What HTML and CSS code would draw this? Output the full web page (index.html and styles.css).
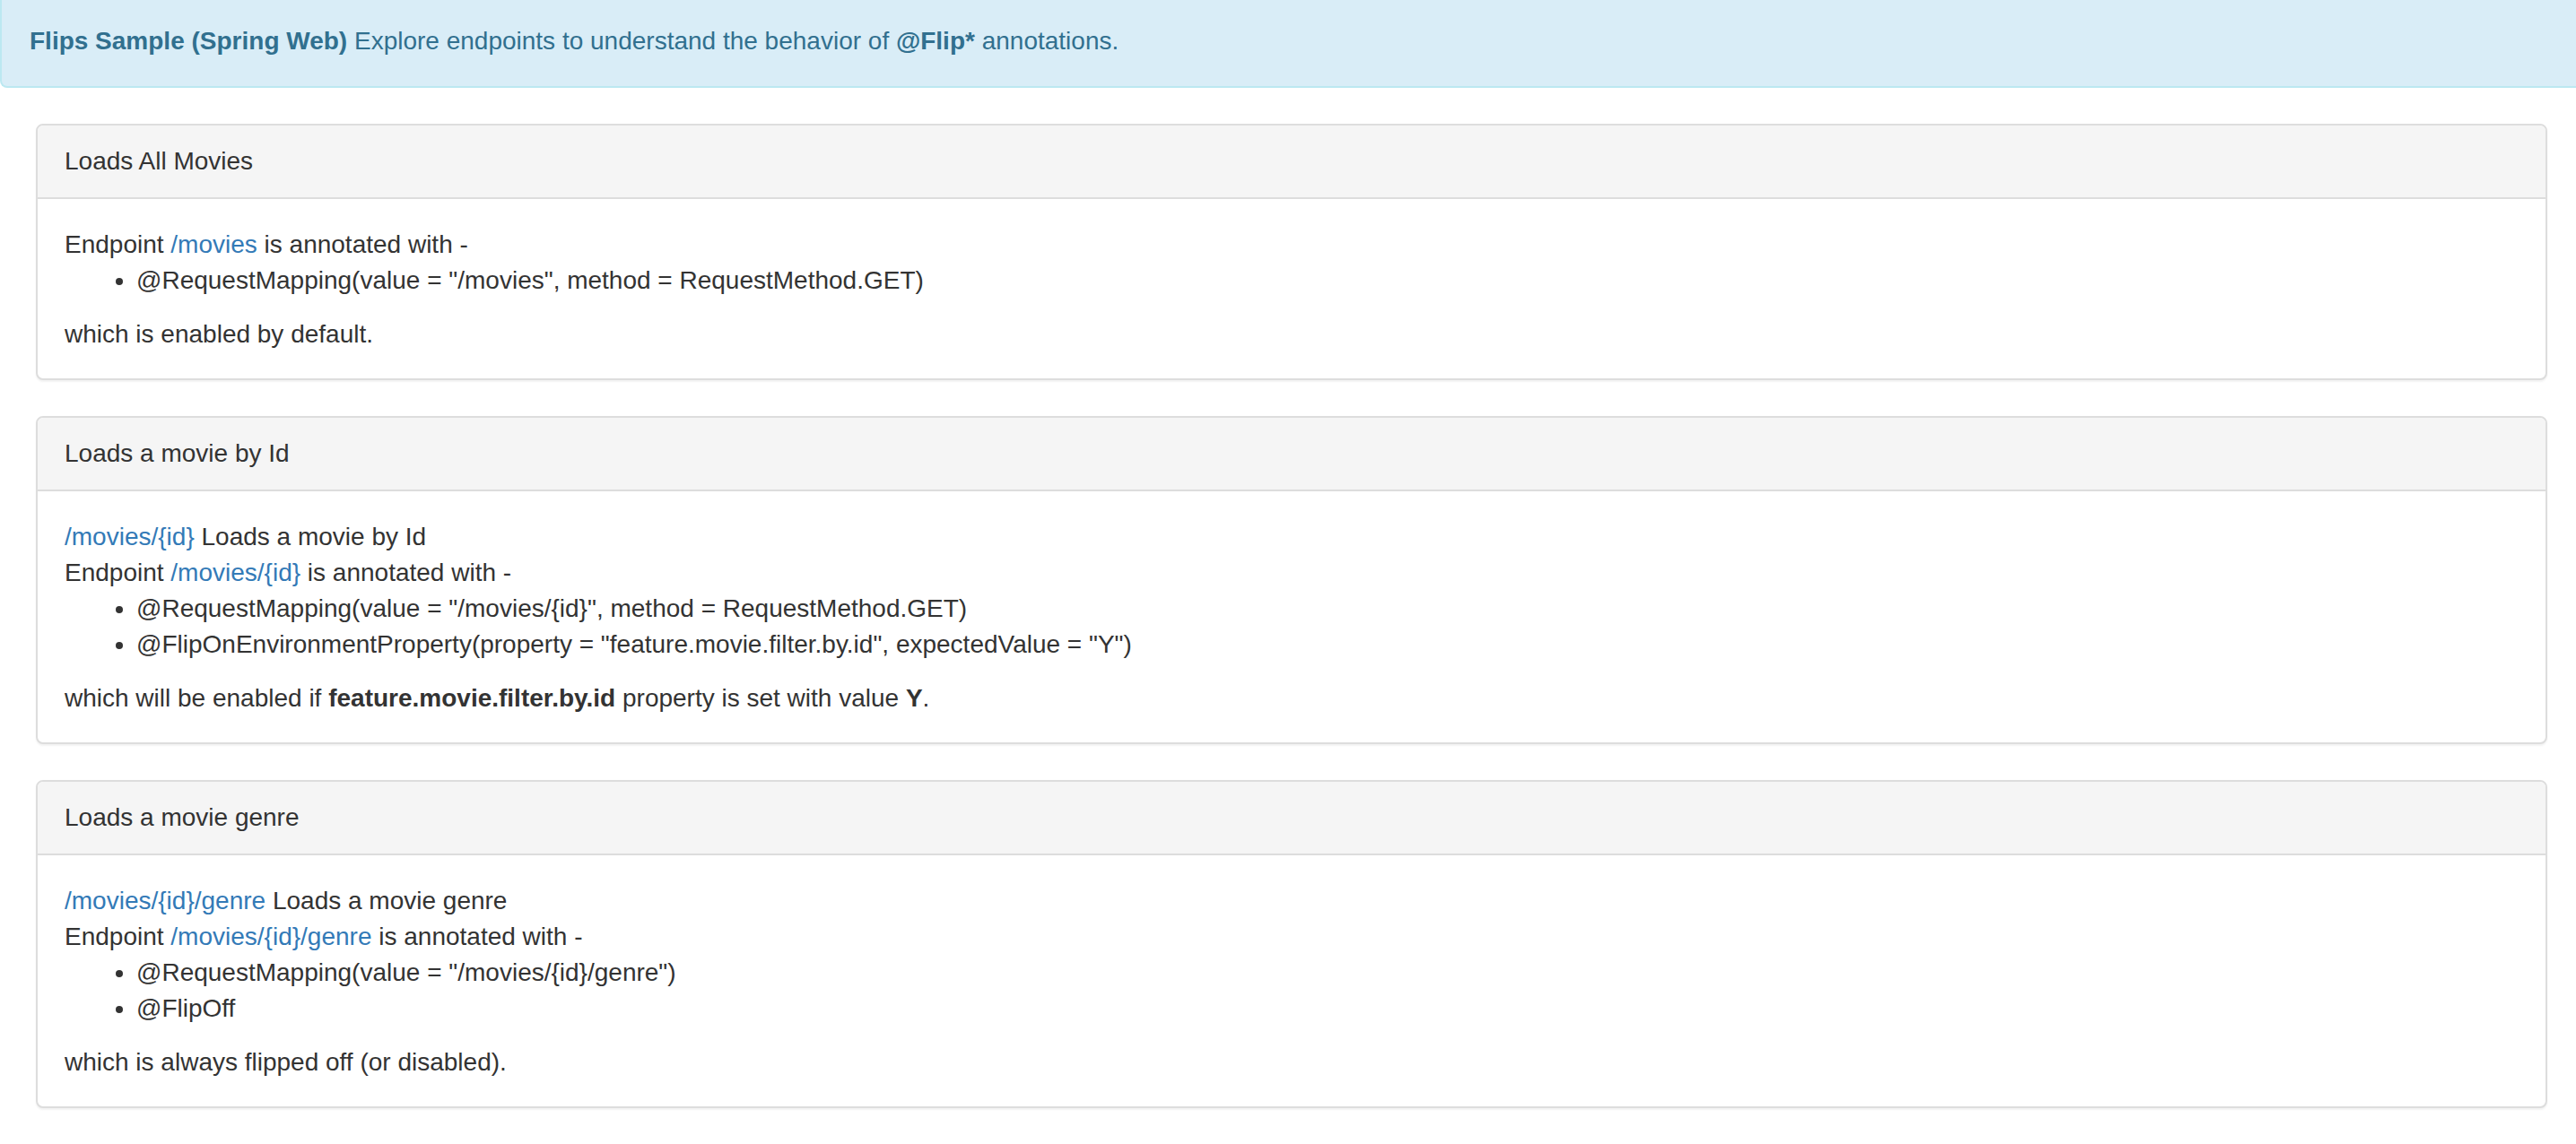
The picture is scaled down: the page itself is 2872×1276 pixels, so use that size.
FILE: index.html
```html
<!DOCTYPE html>
<html lang="en">
<head>
<meta charset="utf-8">
<title>Flips Sample (Spring Web)</title>
<link rel="stylesheet" href="styles.css">
</head>
<body>
<div class="alert">
  <strong>Flips Sample (Spring Web)</strong> Explore endpoints to understand the behavior of <strong>@Flip*</strong> annotations.
</div>

<div class="content">
  <div class="panel">
    <div class="panel-heading">Loads All Movies</div>
    <div class="panel-body">
      Endpoint <a href="#">/movies</a> is annotated with -
      <ul>
        <li>@RequestMapping(value = "/movies", method = RequestMethod.GET)</li>
      </ul>
      which is enabled by default.
    </div>
  </div>

  <div class="panel">
    <div class="panel-heading">Loads a movie by Id</div>
    <div class="panel-body">
      <a href="#">/movies/{id}</a> Loads a movie by Id<br>
      Endpoint <a href="#">/movies/{id}</a> is annotated with -
      <ul>
        <li>@RequestMapping(value = "/movies/{id}", method = RequestMethod.GET)</li>
        <li>@FlipOnEnvironmentProperty(property = "feature.movie.filter.by.id", expectedValue = "Y")</li>
      </ul>
      which will be enabled if <b>feature.movie.filter.by.id</b> property is set with value <b>Y</b>.
    </div>
  </div>

  <div class="panel">
    <div class="panel-heading">Loads a movie genre</div>
    <div class="panel-body">
      <a href="#">/movies/{id}/genre</a> Loads a movie genre<br>
      Endpoint <a href="#">/movies/{id}/genre</a> is annotated with -
      <ul>
        <li>@RequestMapping(value = "/movies/{id}/genre")</li>
        <li>@FlipOff</li>
      </ul>
      which is always flipped off (or disabled).
    </div>
  </div>
</div>
</body>
</html>
```

FILE: styles.css
```css
html, body {
  margin: 0;
  padding: 0;
  background: #ffffff;
  overflow: hidden;
}

body {
  font-family: "Liberation Sans", Arial, Helvetica, sans-serif;
  font-size: 28px;
  line-height: 40px;
  color: #333333;
}

a {
  color: #337ab7;
  text-decoration: none;
}

b, strong {
  font-weight: bold;
}

.alert {
  background: #d9edf7;
  color: #31708f;
  border: 2px solid #bce8f1;
  border-top: 0;
  border-right: 0;
  border-radius: 0 0 0 8px;
  padding: 26px 30px 30px 31px;
  margin: 0 0 40px 0;
}

.content {
  padding: 0 32px 0 40px;
}

.panel {
  background: #ffffff;
  border: 2px solid #dddddd;
  border-radius: 8px;
  box-shadow: 0 2px 2px rgba(0, 0, 0, 0.05);
  margin-bottom: 40px;
}

.panel-heading {
  background: #f5f5f5;
  border-bottom: 2px solid #dddddd;
  border-radius: 6px 6px 0 0;
  padding: 20px 30px 20px 30px;
  color: #333333;
}

.panel-body {
  padding: 31px 30px 29px 30px;
}

.panel-body ul {
  margin: 0 0 20px 0;
  padding-left: 80px;
}
```
